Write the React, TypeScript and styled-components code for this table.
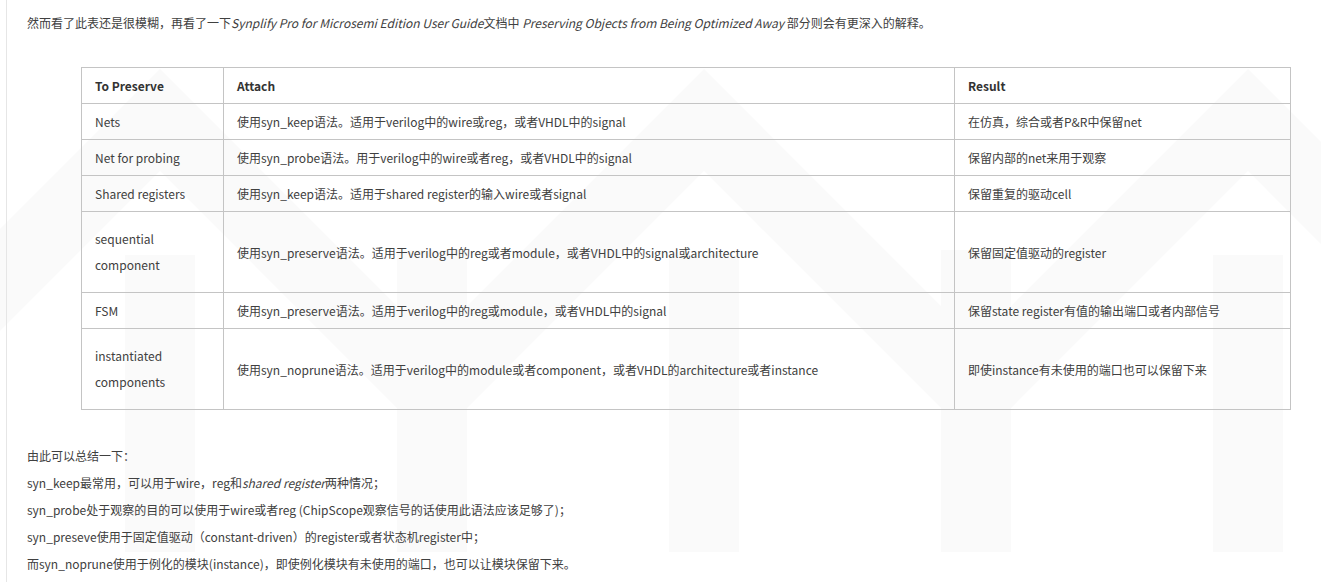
import * as React from 'react'
import styled, {createGlobalStyle} from 'styled-components'

const GlobalStyle = createGlobalStyle `
  html, body {
    margin: 0;
    padding: 0;
    background: #fff;
  }
  body {
    font-family: "Noto Sans CJK SC", sans-serif;
    font-size: 12px;
    color: #404040;
  }
`

const Page = styled.div `
  position: relative;
  width: 1321px;
  height: 582px;
  overflow: hidden;
`

const Watermark = styled.svg `
  position: absolute;
  left: 0;
  top: 0;
  z-index: 0;
  pointer-events: none;
`

const Article = styled.div `
  position: relative;
  z-index: 1;
  margin-left: 6px;
  padding: 9px 0 0 20px;
  min-height: 100%;
  box-sizing: border-box;
  border-left: 1px solid #e6e6e6;
`

const Para = styled.p `
  margin: 0;
  line-height: 27px;
  white-space: nowrap;
`

const Lead = styled(Para)`
  margin-bottom: 31px;
`

const Table = styled.table `
  margin: 0 0 32px 54px;
  border-collapse: collapse;
  table-layout: fixed;
  width: 1209px;
`

const Cell = styled.td < {$tall?: boolean} > `
  border: 1px solid #c4c4c4;
  padding: ${p => p.$tall ? '14px 13px' : '5px 13px 4px'};
  line-height: 26px;
  vertical-align: middle;
  text-align: left;
`

const Head = styled(Cell).attrs({as: 'th'})`
  font-weight: bold;
  color: #333;
`

interface Row {
  keep : string
  attach : string
  result : string
  tall?: boolean
}

const rows : Row[] = [
  {
    keep: 'Nets',
    attach: '使用syn_keep语法。适用于verilog中的wire或reg，或者VHDL中的signal',
    result: '在仿真，综合或者P&R中保留net'
  }, {
    keep: 'Net for probing',
    attach: '使用syn_probe语法。用于verilog中的wire或者reg，或者VHDL中的signal',
    result: '保留内部的net来用于观察'
  }, {
    keep: 'Shared registers',
    attach: '使用syn_keep语法。适用于shared register的输入wire或者signal',
    result: '保留重复的驱动cell'
  }, {
    keep: 'sequential component',
    attach: '使用syn_preserve语法。适用于verilog中的reg或者module，或者VHDL中的signal或architecture',
    result: '保留固定值驱动的register',
    tall: true
  }, {
    keep: 'FSM',
    attach: '使用syn_preserve语法。适用于verilog中的reg或module，或者VHDL中的signal',
    result: '保留state register有值的输出端口或者内部信号'
  }, {
    keep: 'instantiated components',
    attach: '使用syn_noprune语法。适用于verilog中的module或者component，或者VHDL的architecture或者instance',
    result: '即使instance有未使用的端口也可以保留下来',
    tall: true
  }
]

// faint "M" zigzag watermark behind the post
const Mark = () => {
  const apexes = [-384, 160, 704, 1248]
  const zig = apexes.map(a => `${a - 272},392 ${a},120`).join(' ') + ' 1520,392'
  return (
    <Watermark width="1321" height="582" viewBox="0 0 1321 582">
      <g fill="#fafafa">
        {apexes.map(a => (
          <React.Fragment key={a}>
            <rect x={a - 35} y={255} width={70} height={297}/>
            <rect x={a + 237} y={250} width={70} height={302}/>
          </React.Fragment>
        ))}
      </g>
      <polyline
        points={zig}
        fill="none"
        stroke="#fafafa"
        strokeWidth="72"
        strokeLinejoin="miter"/>
    </Watermark>
  )
}

export default class App extends React.PureComponent {
  render() {
    return (
      <Page>
        <GlobalStyle/>
        <Mark/>
        <Article>
          <Lead>
            然而看了此表还是很模糊，再看了一下<i>Synplify Pro for Microsemi Edition User Guide</i>文档中 <i>Preserving Objects from Being Optimized Away</i> 部分则会有更深入的解释。
          </Lead>
          <Table>
            <colgroup>
              <col style={{width: 142}}/>
              <col style={{width: 731}}/>
              <col style={{width: 336}}/>
            </colgroup>
            <thead>
              <tr>
                <Head>To Preserve</Head>
                <Head>Attach</Head>
                <Head>Result</Head>
              </tr>
            </thead>
            <tbody>
              {rows.map(r => (
                <tr key={r.keep}>
                  <Cell $tall={r.tall}>{r.keep}</Cell>
                  <Cell>{r.attach}</Cell>
                  <Cell>{r.result}</Cell>
                </tr>
              ))}
            </tbody>
          </Table>
          <Para>由此可以总结一下：</Para>
          <Para>syn_keep最常用，可以用于wire，reg和<i>shared register</i>两种情况；</Para>
          <Para>syn_probe处于观察的目的可以使用于wire或者reg (ChipScope观察信号的话使用此语法应该足够了)；</Para>
          <Para>syn_preseve使用于固定值驱动（constant-driven）的register或者状态机register中；</Para>
          <Para>而syn_noprune使用于例化的模块(instance)，即使例化模块有未使用的端口，也可以让模块保留下来。</Para>
        </Article>
      </Page>
    )
  }
}
